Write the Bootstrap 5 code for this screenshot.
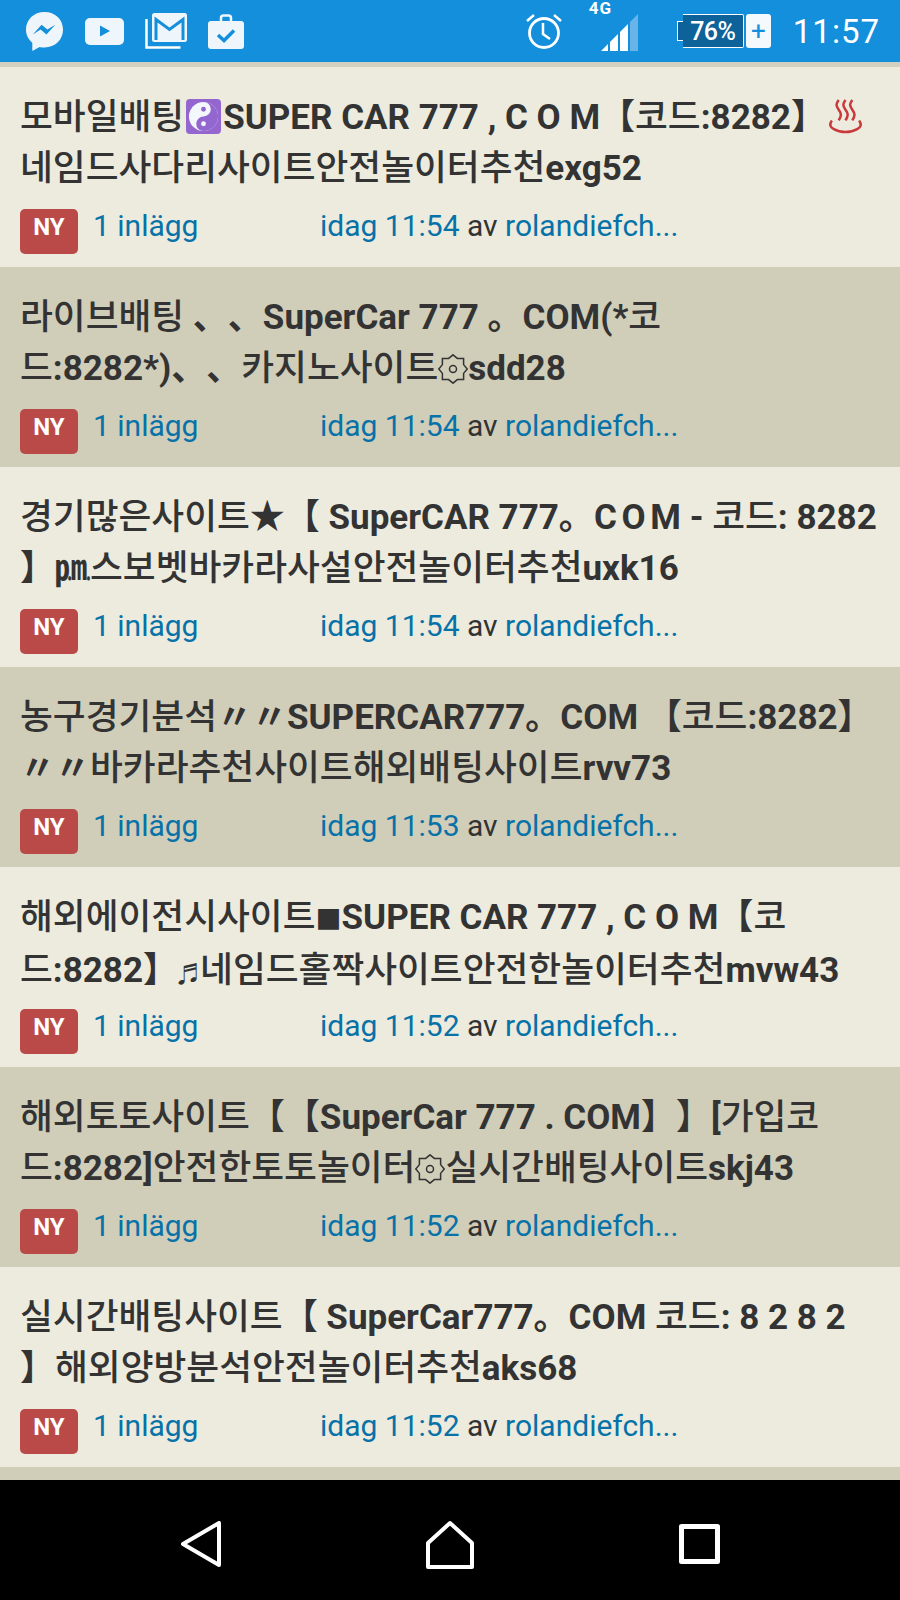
<!DOCTYPE html>
<html lang="ko">
  <head>
    <meta charset="UTF-8" />
    <meta name="viewport" content="width=device-width, initial-scale=1.0" />
    <link
      href="https://cdn.jsdelivr.net/npm/bootstrap@5.3.2/dist/css/bootstrap.min.css"
      rel="stylesheet"
    />
    <title>Inlägg</title>
    <style>
      html, body { height: 100%; }
      body {
        background: #ecebde;
        color: #333;
        font-family: Roboto, "Noto Sans CJK KR", sans-serif;
        overflow: hidden;
      }
      .screen { height: 1600px; }
      .statusbar {
        height: 67px;
        background: #148fdc;
        border-bottom: 5px solid #d3d1bd;
        padding-left: 25px;
        padding-right: 20px;
        color: #fff;
      }
      .left-icons { gap: 21px; }
      .clock-text { font-size: 33px; letter-spacing: 1px; line-height: 1; margin-left: 22px; }
      .net-label { font-size: 17px; font-weight: 700; letter-spacing: 1px; line-height: 1; left: -12px; top: -11px; }
      .net-wrap { margin-left: 39px; margin-right: 38px; padding-top: 3px; }
      .batt-text { font-size: 25px; font-weight: 500; letter-spacing: -0.5px; line-height: 1; }
      .batt-body {
        width: 61px; height: 34px; background: #0d6299; border: 1px solid #fff; border-left: 0; border-radius: 0 2px 2px 0;
      }
      .batt-tip { width: 6px; height: 20px; background: #0d6299; border: 1px solid #fff; border-right: 0; }
      .batt-plus {
        width: 25px; height: 34px; background: #f3f9fd; color: #148fdc; border-radius: 3px;
        margin-left: 2px; font-size: 26px; line-height: 1;
      }
      .thread-rows { flex: 1 1 auto; min-height: 0; overflow: hidden; }
      .thread-row {
        flex: 0 0 200px;
        padding: 25px 20px 0;
        background: #ecebde;
        border: 0;
        border-radius: 0;
        color: #333;
      }
      .thread-row:nth-child(even) { background: #d0cdb9; }
      .thread-title {
        font-size: 35px;
        font-weight: 700;
        line-height: 50px;
        height: 100px;
        margin-bottom: 17px;
        white-space: nowrap;
        text-spacing-trim: space-all;
      }
      .ko { font-weight: 500; font-size: 35.700px; }
      .glyph-sm { font-size: 26px; }
      .glyph-note { font-size: 22px; }
      .tight-caps { word-spacing: -4px; }
      .emoji-svg { width: 35px; height: 35px; vertical-align: -5px; margin: 0 2px; }
      .orn-svg { width: 30px; height: 30px; vertical-align: -4px; }
      .new-tag {
        width: 58px; height: 45px; background: #b94a48; color: #fff;
        font-size: 24px; font-weight: 700; border-radius: 5px; padding-bottom: 8px;
      }
      .meta-line { font-size: 30px; line-height: 33px; }
      .meta-line a { color: #0772a8; text-decoration: none; }
      .meta-count { width: 227px; margin-left: 15px; }
      .navbottom { height: 120px; background: #000; gap: 205px; padding-top: 8px; }
    </style>
  </head>

  <body>
    <svg class="d-none">
      <symbol id="orn" viewBox="0 0 30 30" fill="none" stroke="#333" stroke-width="1.500">
        <path d="M15 .8l4.400 3.600h6.200v6.200L29.200 15l-3.600 4.400v6.200h-6.200L15 29.200l-4.400-3.600H4.400v-6.200L.8 15l3.600-4.400V4.400h6.200z"/>
        <circle cx="15" cy="15" r="3.500"/>
      </symbol>
    </svg>
    <div class="screen d-flex flex-column">
      <div class="statusbar d-flex align-items-center flex-shrink-0">
        <div class="left-icons d-flex align-items-center flex-grow-1">
          <svg width="39" height="41" viewBox="0 0 40 42">
            <path fill="#eef6fc" d="M20 1C9 1 1 9 1 19c0 5.600 2.500 10.300 6.500 13.500V41l7.500-4.200c1.600.4 3.300.6 5 .6 11 0 19-8 19-18.400S31 1 20 1z"/>
            <path fill="#148fdc" d="M8 24l9-10 6 5 8-5-9 10-6-5z"/>
          </svg>
          <svg width="39" height="27" viewBox="0 0 39 27">
            <rect x="0" y="0" width="39" height="27" rx="5" fill="#eef6fc"/>
            <path fill="#148fdc" d="M15 7.500v11l10-5.500z"/>
          </svg>
          <svg width="42" height="36" viewBox="0 0 42 36">
            <path fill="none" stroke="#fff" stroke-width="2.500" d="M1.500 6v28.500h34"/>
            <rect x="7" y="0" width="35" height="29" rx="2.500" fill="#eef6fc"/>
            <path fill="none" stroke="#148fdc" stroke-width="3" d="M11 27V6.500l13.500 10 13.500-10V27"/>
          </svg>
          <svg width="36" height="35" viewBox="0 0 36 35">
            <path fill="none" stroke="#eef6fc" stroke-width="2.500" d="M13 8V4a2.500 2.500 0 0 1 2.500-2.500h5A2.500 2.500 0 0 1 23 4v4"/>
            <rect x="0" y="7" width="36" height="28" rx="3" fill="#eef6fc"/>
            <path fill="none" stroke="#148fdc" stroke-width="3.500" d="M10 21l6 5.500 10-10"/>
          </svg>
        </div>
        <svg width="36" height="36" viewBox="0 0 36 36">
          <circle cx="18" cy="20" r="14.500" fill="none" stroke="#fff" stroke-width="2.800"/>
          <path fill="none" stroke="#fff" stroke-width="2.500" d="M17 10v11l7 5M1 8l7-6M35 8l-7-6"/>
        </svg>
        <div class="net-wrap position-relative">
          <span class="net-label position-absolute">4G</span>
          <svg class="d-block" width="38" height="38" viewBox="0 0 38 38">
            <path fill="#fff" d="M0 37l7-7v7zM9 28l8-8v17H9zM19 18l8-8v27h-8z"/>
            <path fill="#68b4e8" d="M29 8l8-8v37h-8z"/>
          </svg>
        </div>
        <div class="batt-tip"></div>
        <div class="batt-body batt-text d-flex align-items-center justify-content-center">76%</div>
        <div class="batt-plus d-flex align-items-center justify-content-center">+</div>
        <div class="clock-text">11:57</div>
      </div>

      <div class="thread-rows list-group list-group-flush">
        <div class="thread-row list-group-item">
          <div class="thread-title"><span class="ko">모바일배팅</span><svg class="emoji-svg" viewBox="0 0 36 36"><rect width="36" height="36" rx="4" fill="#9367cf"/><circle cx="18" cy="18" r="15" fill="#f3f8fc"/><path fill="#9367cf" d="M18 3a15 15 0 0 1 0 30 7.500 7.500 0 0 1 0-15 7.500 7.500 0 0 0 0-15z"/><circle cx="18" cy="10.500" r="2.500" fill="#9367cf"/><circle cx="18" cy="25.500" r="2.500" fill="#f3f8fc"/></svg>SUPER CAR 777 , C O M【<span class="ko">코드</span>:8282】<svg class="emoji-svg" viewBox="0 0 36 36" fill="none" stroke="#c9383a" stroke-width="2.600"><path d="M11 1c-3 4-3 6 0 10s3 6 0 11M18 1c-3 4-3 6 0 10s3 6 0 11M25 1c-3 4-3 6 0 10s3 6 0 11"/><path d="M4 22C1 26 2 29 6 31c7 4 17 4 24 0 4-2 5-5 2-9"/></svg><br /><span class="ko">네임드사다리사이트안전놀이터추천</span>exg52</div>
          <div class="meta-line d-flex align-items-start">
            <span class="new-tag d-flex align-items-center justify-content-center">NY</span>
            <a class="meta-count" href="#">1 inlägg</a>
            <span><a href="#">idag 11:54</a> av <a href="#">rolandiefch...</a></span>
          </div>
        </div>
        <div class="thread-row list-group-item">
          <div class="thread-title"><span class="ko">라이브배팅</span> 、、SuperCar 777 。COM(*<span class="ko">코</span><br /><span class="ko">드</span>:8282*)、、<span class="ko">카지노사이트</span><svg class="orn-svg"><use href="#orn" /></svg>sdd28</div>
          <div class="meta-line d-flex align-items-start">
            <span class="new-tag d-flex align-items-center justify-content-center">NY</span>
            <a class="meta-count" href="#">1 inlägg</a>
            <span><a href="#">idag 11:54</a> av <a href="#">rolandiefch...</a></span>
          </div>
        </div>
        <div class="thread-row list-group-item">
          <div class="thread-title"><span class="ko">경기많은사이트</span>★【 SuperCAR 777。<span class="tight-caps">C O M</span> - <span class="ko">코드</span>: 8282<br />】㏘<span class="ko">스보벳바카라사설안전놀이터추천</span>uxk16</div>
          <div class="meta-line d-flex align-items-start">
            <span class="new-tag d-flex align-items-center justify-content-center">NY</span>
            <a class="meta-count" href="#">1 inlägg</a>
            <span><a href="#">idag 11:54</a> av <a href="#">rolandiefch...</a></span>
          </div>
        </div>
        <div class="thread-row list-group-item">
          <div class="thread-title"><span class="ko">농구경기분석</span>〃〃SUPERCAR777。COM 【<span class="ko">코드</span>:8282】<br />〃〃<span class="ko">바카라추천사이트해외배팅사이트</span>rvv73</div>
          <div class="meta-line d-flex align-items-start">
            <span class="new-tag d-flex align-items-center justify-content-center">NY</span>
            <a class="meta-count" href="#">1 inlägg</a>
            <span><a href="#">idag 11:53</a> av <a href="#">rolandiefch...</a></span>
          </div>
        </div>
        <div class="thread-row list-group-item">
          <div class="thread-title"><span class="ko">해외에이전시사이트</span><span class="glyph-sm">■</span>SUPER CAR 777 , C O M【<span class="ko">코</span><br /><span class="ko">드</span>:8282】<span class="glyph-note">♬</span><span class="ko">네임드홀짝사이트안전한놀이터추천</span>mvw43</div>
          <div class="meta-line d-flex align-items-start">
            <span class="new-tag d-flex align-items-center justify-content-center">NY</span>
            <a class="meta-count" href="#">1 inlägg</a>
            <span><a href="#">idag 11:52</a> av <a href="#">rolandiefch...</a></span>
          </div>
        </div>
        <div class="thread-row list-group-item">
          <div class="thread-title"><span class="ko">해외토토사이트</span>【【SuperCar 777 . COM】】[<span class="ko">가입코</span><br /><span class="ko">드</span>:8282]<span class="ko">안전한토토놀이터</span><svg class="orn-svg"><use href="#orn" /></svg><span class="ko">실시간배팅사이트</span>skj43</div>
          <div class="meta-line d-flex align-items-start">
            <span class="new-tag d-flex align-items-center justify-content-center">NY</span>
            <a class="meta-count" href="#">1 inlägg</a>
            <span><a href="#">idag 11:52</a> av <a href="#">rolandiefch...</a></span>
          </div>
        </div>
        <div class="thread-row list-group-item">
          <div class="thread-title"><span class="ko">실시간배팅사이트</span>【 SuperCar777。COM <span class="ko">코드</span>: 8 2 8 2<br />】<span class="ko">해외양방분석안전놀이터추천</span>aks68</div>
          <div class="meta-line d-flex align-items-start">
            <span class="new-tag d-flex align-items-center justify-content-center">NY</span>
            <a class="meta-count" href="#">1 inlägg</a>
            <span><a href="#">idag 11:52</a> av <a href="#">rolandiefch...</a></span>
          </div>
        </div>
        <div class="thread-row list-group-item"></div>
      </div>

      <div class="navbottom d-flex align-items-center justify-content-center flex-shrink-0">
        <svg width="40" height="46" viewBox="0 0 40 46" fill="none" stroke="#fff" stroke-width="4" stroke-linejoin="round">
          <path d="M38 2v42L2 23z"/>
        </svg>
        <svg width="48" height="49" viewBox="0 0 48 49" fill="none" stroke="#fff" stroke-width="4" stroke-linejoin="round">
          <path d="M24 3L2 23v24h44V23z"/>
        </svg>
        <svg width="41" height="40" viewBox="0 0 41 40" fill="none" stroke="#fff" stroke-width="5" stroke-linejoin="round">
          <rect x="2.500" y="2.500" width="36" height="35"/>
        </svg>
      </div>
    </div>
  </body>
</html>
